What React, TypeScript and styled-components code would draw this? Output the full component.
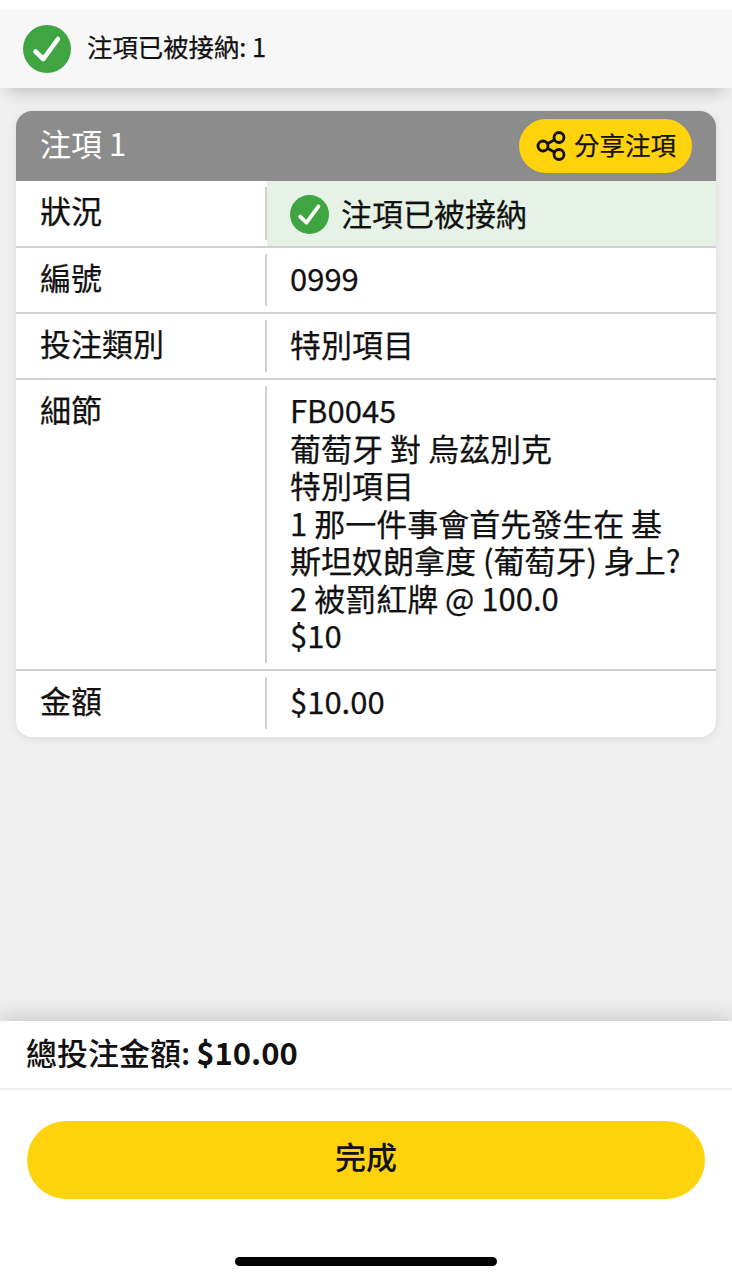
import styled, { createGlobalStyle } from "styled-components";

const GlobalStyle = createGlobalStyle`
  html, body {
    margin: 0;
    padding: 0;
    background: #ffffff;
  }
  body {
    font-family: "Noto Sans CJK TC", "Noto Sans", sans-serif;
    color: #111111;
  }
`;

const mediumFont = `"Noto Sans CJK TC Medium", "Noto Sans CJK TC", sans-serif`;

const rows = [
  { label: "編號", lines: ["0999"] },
  { label: "投注類別", lines: ["特別項目"] },
  {
    label: "細節",
    lines: [
      "FB0045",
      "葡萄牙 對 烏茲別克",
      "特別項目",
      "1 那一件事會首先發生在 基",
      "斯坦奴朗拿度 (葡萄牙) 身上?",
      "2 被罰紅牌 @ 100.0",
      "$10",
    ],
  },
  { label: "金額", lines: ["$10.00"] },
];

const CheckIcon = ({ size }: { size: number }) => (
  <svg width={size} height={size} viewBox="0 0 48 48">
    <circle cx="24" cy="24" r="24" fill="#3fa540" />
    <path
      d="M12.5 26.5 L20.3 34 L35 14"
      fill="none"
      stroke="#ffffff"
      strokeWidth="4.6"
      strokeLinecap="round"
      strokeLinejoin="round"
    />
  </svg>
);

const ShareIcon = () => (
  <svg width="30" height="30" viewBox="0 0 30 30" fill="none" stroke="#111111" strokeWidth="2.8">
    <circle cx="7" cy="15" r="5" />
    <circle cx="23" cy="6.5" r="5" />
    <circle cx="23" cy="23.5" r="5" />
    <path d="M11.4 12.7 L18.6 8.8 M11.4 17.3 L18.6 21.2" />
  </svg>
);

const App = () => {
  return (
    <Page>
      <GlobalStyle />
      <Banner>
        <CheckIcon size={48} />
        <BannerText>注項已被接納: 1</BannerText>
      </Banner>
      <Content>
        <Card>
          <CardHeader>
            <CardTitle>注項 1</CardTitle>
            <ShareButton>
              <ShareIcon />
              <ShareText>分享注項</ShareText>
            </ShareButton>
          </CardHeader>
          <Row>
            <Label>狀況</Label>
            <StatusValue>
              <CheckIcon size={39} />
              <StatusText>注項已被接納</StatusText>
            </StatusValue>
          </Row>
          {rows.map((row) => (
            <Row key={row.label}>
              <Label>{row.label}</Label>
              <Value>
                {row.lines.map((line) => (
                  <div key={line}>{line}</div>
                ))}
              </Value>
            </Row>
          ))}
        </Card>
      </Content>
      <Footer>
        <TotalRow>
          總投注金額:<TotalAmount>$10.00</TotalAmount>
        </TotalRow>
        <ButtonArea>
          <DoneButton>完成</DoneButton>
        </ButtonArea>
        <HomeArea>
          <HomeBar />
        </HomeArea>
      </Footer>
    </Page>
  );
};

export default App;

const Page = styled.div`
  width: 732px;
  height: 1280px;
  display: flex;
  flex-direction: column;
  padding-top: 10px;
  box-sizing: border-box;
  overflow: hidden;
`;

const Banner = styled.div`
  height: 78px;
  flex-shrink: 0;
  display: flex;
  align-items: center;
  gap: 16px;
  padding-left: 23px;
  background: #f7f7f7;
  box-shadow: 0 12px 14px -8px rgba(0, 0, 0, 0.2);
  position: relative;
  z-index: 1;
`;

const BannerText = styled.span`
  font-size: 25.4px;
  line-height: 1;
  margin-bottom: 4px;
  -webkit-text-stroke: 0.25px #111111;
`;

const Content = styled.div`
  flex: 1;
  background: #efefef;
  padding: 23px 16px 0;
`;

const Card = styled.div`
  border-radius: 16px;
  background: #ffffff;
  overflow: hidden;
  box-shadow: 0 2px 8px rgba(0, 0, 0, 0.08);
`;

const CardHeader = styled.div`
  height: 70px;
  display: flex;
  align-items: center;
  justify-content: space-between;
  padding: 0 24px;
  background: #8c8c8c;
`;

const CardTitle = styled.span`
  font-size: 31px;
  color: #ffffff;
  line-height: 1;
  margin-bottom: 8px;
`;

const ShareButton = styled.button`
  width: 173px;
  height: 54px;
  display: flex;
  align-items: center;
  justify-content: center;
  gap: 8px;
  padding: 0 0 0 1px;
  border: none;
  border-radius: 27px;
  background: #ffd30b;
  color: #111111;
  font-family: inherit;
  font-size: 25.5px;
  line-height: 1;
  -webkit-text-stroke: 0.25px #111111;
`;

const ShareText = styled.span`
  margin-bottom: 4px;
`;

const Row = styled.div`
  display: flex;
  min-height: 64px;
  border-bottom: 2px solid #d0d0d0;
  -webkit-text-stroke: 0.25px #111111;
  &:last-child {
    border-bottom-color: transparent;
  }
`;

const Label = styled.div`
  width: 251px;
  flex-shrink: 0;
  box-sizing: border-box;
  padding: 6px 24px 0;
  font-size: 31px;
  line-height: 45px;
  position: relative;
  &::after {
    content: "";
    position: absolute;
    top: 6px;
    bottom: 6px;
    right: 0;
    width: 2px;
    background: #d0d0d0;
  }
`;

const Value = styled.div`
  flex: 1;
  padding: 11px 23px 15px;
  font-size: 31px;
  line-height: 37.5px;
  white-space: nowrap;
`;

const StatusValue = styled.div`
  flex: 1;
  height: 65px;
  display: flex;
  align-items: center;
  gap: 12px;
  padding: 1px 0 0 23px;
  box-sizing: border-box;
  background: #e6f2e6;
  font-size: 31px;
  line-height: 1;
`;

const StatusText = styled.span`
  margin-bottom: 4px;
`;

const Footer = styled.div`
  flex-shrink: 0;
  background: #ffffff;
  box-shadow: 0 -6px 18px rgba(0, 0, 0, 0.14);
  position: relative;
`;

const TotalRow = styled.div`
  height: 61px;
  display: flex;
  align-items: center;
  padding: 0 0 6px 26px;
  border-bottom: 2px solid #eeeeee;
  font-family: ${mediumFont};
  font-size: 31px;
  line-height: 1;
`;

const TotalAmount = styled.span`
  font-family: "Noto Sans CJK TC", sans-serif;
  font-weight: 700;
  margin-left: 6px;
`;

const ButtonArea = styled.div`
  padding: 31px 27px 0 27px;
`;

const DoneButton = styled.button`
  width: 100%;
  height: 78px;
  display: block;
  padding: 0 0 10px;
  border: none;
  border-radius: 39px;
  background: #ffd30b;
  color: #111111;
  font-family: ${mediumFont};
  font-size: 31px;
`;

const HomeArea = styled.div`
  height: 81px;
  display: flex;
  justify-content: center;
  align-items: flex-start;
  padding-top: 58px;
  box-sizing: border-box;
`;

const HomeBar = styled.div`
  width: 262px;
  height: 9px;
  border-radius: 5px;
  background: #000000;
`;
